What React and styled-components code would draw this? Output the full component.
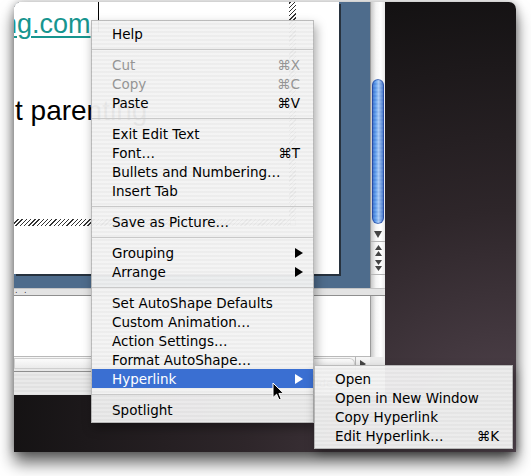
import React from 'react';
import styled, { createGlobalStyle } from 'styled-components';

const GlobalStyle = createGlobalStyle`
  html, body {
    margin: 0;
    padding: 0;
    background: #fff;
  }
  body {
    font-family: 'DejaVu Sans', 'Liberation Sans', sans-serif;
    overflow: hidden;
  }
`;

const Stage = styled.div`
  position: relative;
  width: 531px;
  height: 476px;
  padding: 2px 0 0 14px;
  box-sizing: border-box;
  overflow: hidden;
`;

const Frame = styled.div`
  width: 502px;
  height: 450px;
  border-radius: 7px 7px 0 0;
  overflow: hidden;
  display: flex;
  align-items: flex-start;
  background: radial-gradient(ellipse at 100% 100%, #564852 0%, #2e262a 38%, #141213 72%, #0c0c0c 100%);
  box-shadow: 0 11px 16px rgba(0, 0, 0, 0.6), 0 0 9px rgba(0, 0, 0, 0.3);
`;

const PptWindow = styled.div`
  width: 371px;
  height: 393px;
  display: flex;
  flex-direction: column;
  background: #ececec;
`;

const EditRow = styled.div`
  display: flex;
  height: 286px;
`;

const SlidePane = styled.div`
  flex: 1;
  display: flex;
  padding: 0 31px 14px 0;
  background: #4e6c8c;
`;

const Slide = styled.div`
  flex: 1;
  position: relative;
  overflow: hidden;
  background: #fff;
  box-shadow: 2px 2px 0 #27323e;
`;

const HatchFrame = styled.div`
  position: relative;
  width: 282px;
  height: 224px;
  box-sizing: border-box;
  padding: 0 7px 7px 0;
  background: repeating-linear-gradient(135deg, #333 0 1px, #fff 1px 3px);
`;

const TextArea = styled.div`
  height: 100%;
  background: #fff;
  font-family: 'Liberation Sans', Arial, sans-serif;
`;

const LinkLine = styled.div`
  margin-left: -12px;
  height: 44px;
  line-height: 44px;
  font-size: 27px;
  white-space: nowrap;
`;

const Link = styled.span`
  color: #17958f;
  text-decoration: underline;
  text-decoration-thickness: 2px;
  text-underline-offset: 3px;
`;

const Caret = styled.span`
  display: inline-block;
  width: 1px;
  height: 30px;
  margin-left: 7px;
  vertical-align: top;
  background: #000;
`;

const BodyLine = styled.div`
  margin-top: 47px;
  padding-left: 1px;
  font-size: 28px;
  line-height: 36px;
  color: #000;
  white-space: nowrap;
`;

const Handle = styled.div`
  position: absolute;
  right: 0;
  bottom: 0;
  width: 6px;
  height: 6px;
  box-sizing: border-box;
  border: 1px solid #999;
  background: #fff;
`;

const VScroll = styled.div`
  width: 15px;
  display: flex;
  flex-direction: column;
  background: linear-gradient(to right, #c9c9c9, #f4f4f4 35%, #fff 70%, #e9e9e9);
  border-left: 1px solid #9a9a9a;
  box-sizing: border-box;
`;

const Track = styled.div`
  height: ${p => p.$h}px;
  padding-top: ${p => p.$thumbTop || 0}px;
  box-sizing: border-box;
`;

const Thumb = styled.div`
  width: 12px;
  height: ${p => p.$h}px;
  margin-left: 1px;
  border-radius: 6px;
  background:
    linear-gradient(to right, rgba(20, 60, 160, 0.55), rgba(255, 255, 255, 0) 30%, rgba(255, 255, 255, 0.45) 55%, rgba(20, 60, 160, 0.5)),
    repeating-linear-gradient(to bottom, #5b98e8 0 2px, #6aa6f0 2px 4px);
  box-shadow: inset 0 0 0 1px rgba(20, 50, 140, 0.55);
`;

const ScrollBtn = styled.div`
  height: ${p => p.$h}px;
  display: flex;
  flex-direction: column;
  align-items: center;
  justify-content: center;
  gap: 2px;
  border-top: ${p => (p.$line ? '1px solid #b5b5b5' : 'none')};
  box-sizing: border-box;
`;

const Splitter = styled.div`
  height: 8px;
  padding-left: 1px;
  box-sizing: border-box;
  background: #e3e3e3;
  border-top: 1px solid #c4c4c4;
  border-bottom: 1px solid #8e8e8e;
  font-size: 8px;
  line-height: 3px;
  color: #333;
  letter-spacing: 2px;
`;

const NotesRow = styled.div`
  display: flex;
  height: 61px;
`;

const Notes = styled.div`
  flex: 1;
  background: #fff;
  border-bottom: 1px solid #b9b9b9;
`;

const HScrollRow = styled.div`
  display: flex;
  height: 15px;
  background: linear-gradient(to bottom, #f7f7f7, #e6e6e6);
  border-bottom: 1px solid #8e8e8e;
  box-sizing: border-box;
`;

const HTrack = styled.div`
  flex: 1;
  margin: 1px 0 2px;
  border-radius: 0 6px 6px 0;
  background: linear-gradient(to bottom, #fdfdfd, #e9e9e9);
  box-shadow: inset 0 0 0 1px #cfcfcf;
`;

const HArrow = styled.div`
  width: 14px;
  display: flex;
  align-items: center;
  justify-content: center;
  border-left: 1px solid #b5b5b5;
`;

const Corner = styled.div`
  width: 15px;
  background: #ececec;
`;

const StatusBar = styled.div`
  flex: 1;
  display: flex;
  align-items: center;
  justify-content: flex-end;
  padding-right: 19px;
  background: repeating-linear-gradient(to bottom, #e9e9e9 0 2px, #e1e1e1 2px 4px);
  font-size: 11px;
  color: #666;
`;

const Menu = styled.div`
  position: absolute;
  left: ${p => p.$x}px;
  top: ${p => p.$y}px;
  width: ${p => p.$w}px;
  box-sizing: border-box;
  padding: 3px 0;
  border: 1px solid rgba(120, 120, 120, 0.45);
  background: repeating-linear-gradient(to bottom, rgba(243, 243, 243, 0.955) 0 2px, rgba(236, 236, 236, 0.955) 2px 4px);
  box-shadow: 2px 5px 10px rgba(0, 0, 0, 0.35);
`;

const Item = styled.div`
  display: flex;
  align-items: center;
  height: 19px;
  padding: 0 10px 0 20px;
  font-size: 13.5px;
  white-space: nowrap;
  color: ${p => (p.$disabled ? '#959595' : p.$active ? '#fff' : '#000')};
  background: ${p => (p.$active ? '#3a6fd2' : 'transparent')};
`;

const Shortcut = styled.span`
  margin-left: auto;
  padding-right: 3px;
`;

const SubArrow = styled.svg`
  margin-left: auto;
`;

const Separator = styled.div`
  height: 12px;
  display: flex;
  align-items: center;
  &::after {
    content: '';
    flex: 1;
    height: 1px;
    background: #c9c9c9;
  }
`;

const Cursor = styled.svg`
  position: absolute;
  left: 272px;
  top: 382px;
`;

const menuItems = [
  { label: 'Help' },
  'sep',
  { label: 'Cut', shortcut: '⌘X', disabled: true },
  { label: 'Copy', shortcut: '⌘C', disabled: true },
  { label: 'Paste', shortcut: '⌘V' },
  'sep',
  { label: 'Exit Edit Text' },
  { label: 'Font…', shortcut: '⌘T' },
  { label: 'Bullets and Numbering…' },
  { label: 'Insert Tab' },
  'sep',
  { label: 'Save as Picture…' },
  'sep',
  { label: 'Grouping', submenu: true },
  { label: 'Arrange', submenu: true },
  'sep',
  { label: 'Set AutoShape Defaults' },
  { label: 'Custom Animation…' },
  { label: 'Action Settings…' },
  { label: 'Format AutoShape…' },
  { label: 'Hyperlink', submenu: true, active: true },
  'sep',
  { label: 'Spotlight' },
];

const hyperlinkItems = [
  { label: 'Open' },
  { label: 'Open in New Window' },
  { label: 'Copy Hyperlink' },
  { label: 'Edit Hyperlink…', shortcut: '⌘K' },
];

const Triangle = ({ dir = 'right', color = '#000', w = 8, h = 10 }) => {
  const paths = {
    right: `M0 0 L${w} ${h / 2} L0 ${h} Z`,
    down: `M0 0 L${w} 0 L${w / 2} ${h} Z`,
    up: `M${w / 2} 0 L${w} ${h} L0 ${h} Z`,
  };
  return (
    <svg width={w} height={h} viewBox={`0 0 ${w} ${h}`}>
      <path d={paths[dir]} fill={color} />
    </svg>
  );
};

const DoubleArrow = ({ dir }) => (
  <svg width="9" height="12" viewBox="0 0 9 12">
    {dir === 'up' ? (
      <>
        <path d="M4.5 0 L8 5 L1 5 Z" fill="#444" />
        <path d="M4.5 6 L8 11 L1 11 Z" fill="#444" />
      </>
    ) : (
      <>
        <path d="M1 1 L8 1 L4.5 6 Z" fill="#444" />
        <path d="M1 7 L8 7 L4.5 12 Z" fill="#444" />
      </>
    )}
  </svg>
);

const MenuList = ({ items }) => items.map((it, i) => {
  if (it === 'sep') return <Separator key={i} />;
  return (
    <Item key={i} $disabled={it.disabled} $active={it.active}>
      {it.label}
      {it.shortcut && <Shortcut>{it.shortcut}</Shortcut>}
      {it.submenu && (
        <SubArrow width="8" height="10" viewBox="0 0 8 10">
          <path d="M0 0 L8 5 L0 10 Z" fill={it.active ? '#fff' : '#000'} />
        </SubArrow>
      )}
    </Item>
  );
});

const App = () => (
  <>
    <GlobalStyle />
    <Stage>
      <Frame>
        <PptWindow>
          <EditRow>
            <SlidePane>
              <Slide>
                <HatchFrame>
                  <TextArea>
                    <LinkLine>
                      <Link>ng.com</Link>
                      <Caret />
                    </LinkLine>
                    <BodyLine>t parenting</BodyLine>
                  </TextArea>
                  <Handle />
                </HatchFrame>
              </Slide>
            </SlidePane>
            <VScroll>
              <Track $h={225} $thumbTop={77}>
                <Thumb $h={145} />
              </Track>
              <ScrollBtn $h={14}>
                <Triangle dir="down" color="#444" w={8} h={7} />
              </ScrollBtn>
              <ScrollBtn $h={33} $line>
                <DoubleArrow dir="up" />
                <DoubleArrow dir="down" />
              </ScrollBtn>
              <ScrollBtn $h={14} $line />
            </VScroll>
          </EditRow>
          <Splitter>. .</Splitter>
          <NotesRow>
            <Notes />
            <VScroll />
          </NotesRow>
          <HScrollRow>
            <HTrack />
            <HArrow>
              <Triangle dir="right" color="#444" w={6} h={8} />
            </HArrow>
            <Corner />
          </HScrollRow>
          <StatusBar>Slide Show</StatusBar>
        </PptWindow>
      </Frame>

      <Menu $x={91} $y={20} $w={223}>
        <MenuList items={menuItems} />
      </Menu>

      <Menu $x={314} $y={365} $w={199}>
        <MenuList items={hyperlinkItems} />
      </Menu>

      <Cursor width="14" height="20" viewBox="0 0 14 20">
        <path
          d="M1 1 L1 15.5 L4.6 12.2 L7 17.8 L9.2 16.9 L6.9 11.4 L11.6 11.4 Z"
          fill="#000"
          stroke="#fff"
          strokeWidth="1"
          strokeLinejoin="round"
        />
      </Cursor>
    </Stage>
  </>
);

export default App;
